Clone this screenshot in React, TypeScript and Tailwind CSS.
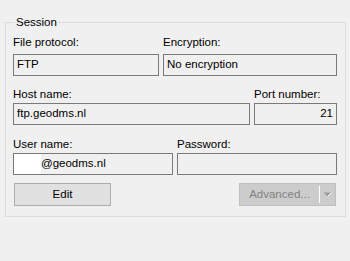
import React from "react";

const FONT = { fontFamily: "'Liberation Sans', Arial, sans-serif" };

function Field({ label, value, width, right }: { label: string; value?: string; width: string; right?: boolean }) {
  return (
    <div className={`flex flex-col ${width}`}>
      <span className="h-[15px] leading-[15px]">{label}</span>
      <div
        className={`mt-px flex h-[22px] items-center border border-[#7a7a7a] bg-[#f0f0f0] px-[3px] ${right ? "justify-end" : ""}`}
      >
        {value}
      </div>
    </div>
  );
}

export default function App() {
  return (
    <div className="h-[261px] w-[350px] bg-[#f0f0f0] text-[11.5px] text-black" style={FONT}>
      <div className="pl-[5px] pt-[15px]">
        <fieldset className="w-[341px] border border-[#dcdcdc] pb-[10px] pl-[7px] pr-[8px]">
          <legend className="ml-[2px] px-[1px] leading-[15px]">Session</legend>

          {/* protocol row */}
          <div className="mt-[5px] flex justify-between">
            <div className="flex w-[146px] flex-col">
              <span className="h-[15px] leading-[15px]">File protocol:</span>
              <div className="mt-[4px] flex h-[22px] items-center border border-[#7a7a7a] bg-[#f0f0f0] px-[3px]">FTP</div>
            </div>
            <div className="flex w-[174px] flex-col">
              <span className="h-[15px] leading-[15px]">Encryption:</span>
              <div className="mt-[4px] flex h-[22px] items-center border border-[#7a7a7a] bg-[#f0f0f0] px-[3px]">No encryption</div>
            </div>
          </div>

          {/* host row */}
          <div className="mt-[11px] flex justify-between">
            <Field label="Host name:" value="ftp.geodms.nl" width="w-[237px]" />
            <Field label="Port number:" value="21" width="w-[83px]" right />
          </div>

          {/* credentials row */}
          <div className="mt-[12px] flex justify-between">
            <div className="flex w-[160px] flex-col">
              <span className="h-[15px] leading-[15px]">User name:</span>
              <div className="mt-px flex h-[22px] items-center border border-[#7a7a7a] bg-[#f0f0f0]">
                <span className="h-full w-[27px] bg-white" />
                <span>@geodms.nl</span>
              </div>
            </div>
            <Field label="Password:" width="w-[160px]" />
          </div>

          {/* buttons */}
          <div className="mt-[8px] flex justify-between px-px">
            <button className="h-[23px] w-[97px] border border-[#adadad] bg-[#e1e1e1]">Edit</button>
            <div className="flex h-[23px] w-[97px] items-center border border-[#bfbfbf] bg-[#cccccc] text-[#838383]">
              <span className="flex-1 text-center">Advanced...</span>
              <span className="h-[17px] w-px bg-white" />
              <svg width="15" height="21" viewBox="0 0 15 21">
                <path d="M3.5 8.5 L11.5 8.5 L7.5 12.5 Z" fill="#9a9a9a" />
                <path d="M7.5 12.5 L11.5 8.5" stroke="#ffffff" strokeWidth="1" />
              </svg>
            </div>
          </div>
        </fieldset>
      </div>
    </div>
  );
}
